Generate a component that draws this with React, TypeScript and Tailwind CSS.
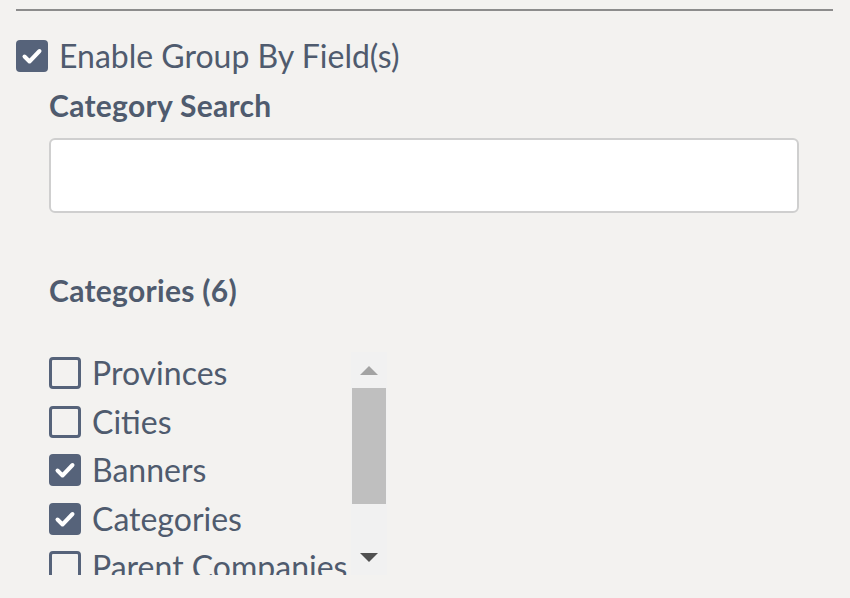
import React from "react";

const categories = [
  { label: "Provinces", checked: false },
  { label: "Cities", checked: false },
  { label: "Banners", checked: true },
  { label: "Categories", checked: true },
  { label: "Parent Companies", checked: false },
  { label: "Companies", checked: false },
];

const Box = ({ checked }: { checked: boolean }) =>
  checked ? (
    <span className="flex h-[32px] w-[32px] shrink-0 items-center justify-center rounded-[4px] bg-[#56637a]">
      <svg width="22" height="22" viewBox="0 0 22 22">
        <path d="M3.5 11.5 L8.5 16.5 L18.5 6" fill="none" stroke="#fff" strokeWidth="4" strokeLinecap="round" strokeLinejoin="round" />
      </svg>
    </span>
  ) : (
    <span className="h-[32px] w-[32px] shrink-0 rounded-[4px] border-[3px] border-[#56637a] bg-[#f3f2f0]" />
  );

export default function App() {
  return (
    <div
      className="min-h-screen bg-[#f3f2f0] pl-[16px] pr-[17px] pt-[9px] text-[#4f5b6e]"
      style={{ fontFamily: "Lato, 'Open Sans', sans-serif" }}
    >
      <div className="h-[2px] bg-[#8c8c8c]" />

      <div className="mt-[29px] flex h-[32px] items-center gap-[11px]">
        <Box checked />
        <span className="text-[32px] leading-[32px]">Enable Group By Field(s)</span>
      </div>

      <div className="pl-[33px]">
        <div className="mt-[17px] text-[30px] font-bold leading-[32px] tracking-[0.3px]">Category Search</div>
        <input
          type="text"
          className="mt-[17px] block h-[75px] w-[750px] rounded-[6px] border-2 border-[#cfcfcf] bg-white px-3 text-[28px] outline-none"
        />

        <div className="mt-[61px] text-[30px] font-bold leading-[32px] tracking-[0.3px]">Categories (6)</div>

        <div className="mt-[46px] flex h-[223px] w-[338px] overflow-hidden">
          <div className="flex min-w-0 flex-1 flex-col gap-[16.5px] overflow-hidden pt-[5px]">
            {categories.map((c) => (
              <div key={c.label} className="flex h-[32px] shrink-0 items-center gap-[11px] whitespace-nowrap">
                <Box checked={c.checked} />
                <span className="text-[32px] leading-[32px]">{c.label}</span>
              </div>
            ))}
          </div>
          <div className="flex w-[36px] shrink-0 flex-col bg-[#f1f1f1]">
            <div className="flex h-[36px] items-center justify-center">
              <svg width="18" height="9" viewBox="0 0 18 9">
                <polygon points="9,0 18,9 0,9" fill="#a3a3a3" />
              </svg>
            </div>
            <div className="mx-[1px] h-[116px] bg-[#bfbfbf]" />
            <div className="flex-1" />
            <div className="flex h-[36px] items-center justify-center">
              <svg width="18" height="9" viewBox="0 0 18 9">
                <polygon points="0,0 18,0 9,9" fill="#505050" />
              </svg>
            </div>
          </div>
        </div>
      </div>
    </div>
  );
}
